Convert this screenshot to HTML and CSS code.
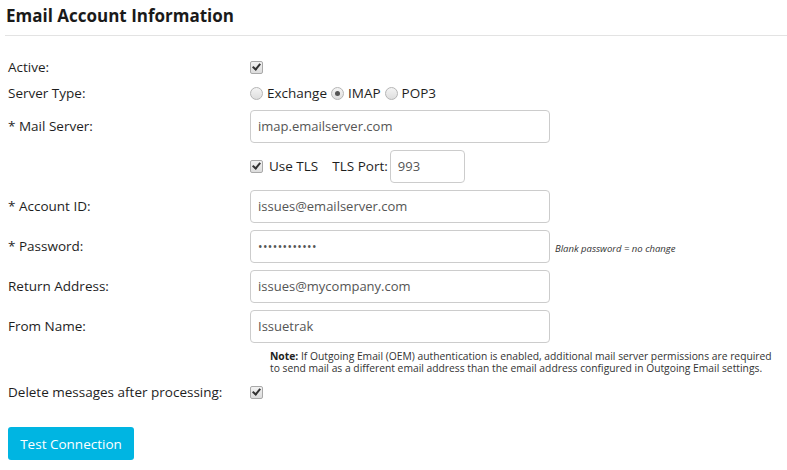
FILE: index.html
```html
<!DOCTYPE html>
<html>
<head>
<meta charset="utf-8">
<link rel="stylesheet" href="styles.css">
</head>
<body>
<div class="page">
  <h1 class="title">Email Account Information</h1>
  <div class="form">
    <div class="row row-short">
      <div class="label">Active:</div>
      <div class="value"><span class="cb checked"></span></div>
    </div>
    <div class="row row-short">
      <div class="label">Server Type:</div>
      <div class="value">
        <span class="rd"></span><span class="opt">Exchange</span>
        <span class="rd checked"></span><span class="opt">IMAP</span>
        <span class="rd"></span><span class="opt">POP3</span>
      </div>
    </div>
    <div class="row row-field first-field">
      <div class="label">* Mail Server:</div>
      <div class="value"><div class="input">imap.emailserver.com</div></div>
    </div>
    <div class="row row-field">
      <div class="label"></div>
      <div class="value">
        <span class="cb checked"></span><span class="opt tls">Use TLS</span>
        <span class="opt port-label">TLS Port:</span>
        <div class="input small">993</div>
      </div>
    </div>
    <div class="row row-field">
      <div class="label">* Account ID:</div>
      <div class="value"><div class="input">issues@emailserver.com</div></div>
    </div>
    <div class="row row-field">
      <div class="label">* Password:</div>
      <div class="value"><div class="input pw">••••••••••••</div><span class="hint">Blank password = no change</span></div>
    </div>
    <div class="row row-field">
      <div class="label">Return Address:</div>
      <div class="value"><div class="input">issues@mycompany.com</div></div>
    </div>
    <div class="row row-field">
      <div class="label">From Name:</div>
      <div class="value"><div class="input">Issuetrak</div></div>
    </div>
    <div class="note">
      <div class="note-line"><b>Note:</b> If Outgoing Email (OEM) authentication is enabled, additional mail server permissions are required</div>
      <div class="note-line">to send mail as a different email address than the email address configured in Outgoing Email settings.</div>
    </div>
    <div class="row row-short delete-row">
      <div class="label">Delete messages after processing:</div>
      <div class="value"><span class="cb checked"></span></div>
    </div>
  </div>
  <button class="btn">Test Connection</button>
</div>
</body>
</html>
```
FILE: styles.css
```css
html, body {
  margin: 0;
  padding: 0;
  background: #fff;
}
body {
  font-family: "Open Sans", "Noto Sans", sans-serif;
  font-size: 13.5px;
  color: #1e1e1e;
}
.page {
  padding: 0 0 0 8px;
}
.title {
  margin: 0 0 0 -3px;
  padding: 4px 0 8px 1px;
  font-size: 17px;
  font-weight: 700;
  color: #1a1a1a;
  border-bottom: 1px solid #e3e3e3;
}
.form {
  padding-top: 18px;
}
.row {
  display: flex;
  align-items: center;
}
.row-short {
  height: 26px;
}
.row-field {
  height: 32px;
  margin-bottom: 8px;
}
.first-field {
  margin-top: 4px;
}
.label {
  width: 242px;
  flex: none;
}
.value {
  display: flex;
  align-items: center;
  flex: 1;
}
.cb {
  width: 11px;
  height: 11px;
  border: 1px solid #a9a9a9;
  border-radius: 2px;
  background: linear-gradient(#f2f2f2, #dcdcdc);
  position: relative;
  flex: none;
}
.cb.checked::after {
  content: "";
  position: absolute;
  left: 3px;
  top: 0px;
  width: 3px;
  height: 6px;
  border: solid #333;
  border-width: 0 2px 2px 0;
  transform: rotate(40deg);
}
.rd {
  width: 11px;
  height: 11px;
  border: 1px solid #b5b5b5;
  border-radius: 50%;
  background: linear-gradient(#f4f4f4, #dedede);
  position: relative;
  flex: none;
  margin-right: 4px;
}
.rd.checked::after {
  content: "";
  position: absolute;
  left: 3px;
  top: 3px;
  width: 5px;
  height: 5px;
  border-radius: 50%;
  background: #555;
}
.opt {
  margin-right: 4px;
}
.tls {
  margin-left: 6px;
  margin-right: 14px;
}
.port-label {
  margin-right: 2px;
}
.input {
  box-sizing: border-box;
  width: 300px;
  height: 33px;
  border: 1px solid #ccc;
  border-radius: 4px;
  padding: 0 7px;
  display: flex;
  align-items: center;
  color: #555;
  font-size: 13px;
}
.input.small {
  width: 75px;
}
.input.pw {
  letter-spacing: 0.4px;
  font-size: 12px;
}
.hint {
  margin-left: 5px;
  font-size: 9.5px;
  font-style: italic;
  color: #333;
  padding-top: 4px;
}
.note {
  margin-left: 262px;
  margin-top: 1px;
  font-size: 10.3px;
  color: #333;
  white-space: nowrap;
}
.note-line {
  height: 12px;
  line-height: 12px;
}
.note b {
  color: #222;
}
.delete-row {
  margin-top: 5px;
}
.btn {
  margin-top: 22px;
  width: 126px;
  height: 33px;
  border: none;
  border-radius: 3px;
  background: #00b5e2;
  color: #fff;
  font-family: "Open Sans", "Noto Sans", sans-serif;
  font-size: 13.5px;
  padding: 0;
}
```
